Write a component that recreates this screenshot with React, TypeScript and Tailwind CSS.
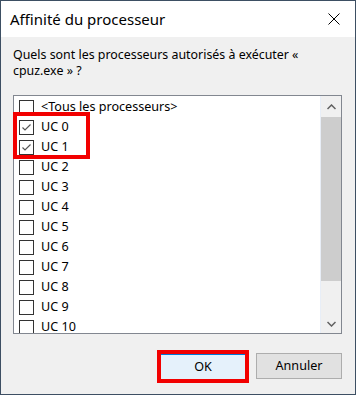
import React from 'react';

const rows = [
  { label: '<Tous les processeurs>', checked: false },
  { label: 'UC 0', checked: true },
  { label: 'UC 1', checked: true },
  { label: 'UC 2', checked: false },
  { label: 'UC 3', checked: false },
  { label: 'UC 4', checked: false },
  { label: 'UC 5', checked: false },
  { label: 'UC 6', checked: false },
  { label: 'UC 7', checked: false },
  { label: 'UC 8', checked: false },
  { label: 'UC 9', checked: false },
  { label: 'UC 10', checked: false },
];

function CheckBox({ checked }: { checked: boolean }) {
  return (
    <span className="flex h-[15px] w-[15px] shrink-0 items-center justify-center border border-[#333333] bg-white">
      {checked && (
        <svg width="13" height="13" viewBox="0 0 13 13" fill="none" stroke="#555555" strokeWidth="1.2">
          <path d="M2.5 6.5 L5 9 L10.5 3.5" />
        </svg>
      )}
    </span>
  );
}

export default function App() {
  return (
    <div
      className="flex h-[395px] w-[356px] flex-col border border-[#3d4f63] bg-[#f0f0f0] text-black"
      style={{ fontFamily: '"Noto Sans", "Open Sans", sans-serif' }}
    >
      {/* Title bar */}
      <div className="flex h-[36px] shrink-0 items-center justify-between bg-white pl-[9px] pr-[15px]">
        <span className="text-[15px] leading-none">Affinité du processeur</span>
        <svg width="12" height="12" viewBox="0 0 12 12" stroke="#000" strokeWidth="1">
          <path d="M0.5 0.5 L11.5 11.5 M11.5 0.5 L0.5 11.5" />
        </svg>
      </div>

      <div className="flex flex-1 flex-col px-[12px]">
        <p className="pt-[10px] text-[12.4px] leading-[16px]">
          Quels sont les processeurs autorisés à exécuter «
          <br />
          cpuz.exe » ?
        </p>

        {/* List box */}
        <div className="relative mt-[16px] flex h-[239px] w-[329px] border border-[#828790] bg-white">
          <div className="flex-1 overflow-hidden pt-px">
            {rows.map((r) => (
              <div key={r.label} className="flex h-[20px] items-center gap-[7px] pl-[5px] text-[12.6px]">
                <CheckBox checked={r.checked} />
                <span className="whitespace-nowrap leading-none">{r.label}</span>
              </div>
            ))}
          </div>

          {/* Scrollbar */}
          <div className="flex w-[21px] flex-col border-l border-[#e8eef7] bg-[#f0f0f0]">
            <div className="flex h-[21px] items-center justify-center">
              <svg width="9" height="6" viewBox="0 0 9 6" fill="none" stroke="#606060" strokeWidth="1.5">
                <path d="M0.5 5 L4.5 1 L8.5 5" />
              </svg>
            </div>
            <div className="flex-1">
              <div className="h-[164px] bg-[#cdcdcd]" />
            </div>
            <div className="flex h-[19px] items-center justify-center">
              <svg width="9" height="6" viewBox="0 0 9 6" fill="none" stroke="#606060" strokeWidth="1.5">
                <path d="M0.5 1 L4.5 5 L8.5 1" />
              </svg>
            </div>
          </div>

          {/* Highlight */}
          <div className="absolute left-[-1px] top-[16px] h-[47px] w-[77px] border-4 border-[#f20000]" />
        </div>

        {/* Buttons */}
        <div className="mt-[19px] flex justify-end gap-[10px] pr-px">
          <div className="relative">
            <button className="h-[26px] w-[86px] border border-[#0078d7] bg-[#e5f1fb] text-[12.6px]">OK</button>
            <div className="absolute -inset-[3px] border-4 border-[#f20000]" />
          </div>
          <button className="h-[26px] w-[86px] border border-[#adadad] bg-[#e1e1e1] text-[12.6px]">Annuler</button>
        </div>
      </div>
    </div>
  );
}
